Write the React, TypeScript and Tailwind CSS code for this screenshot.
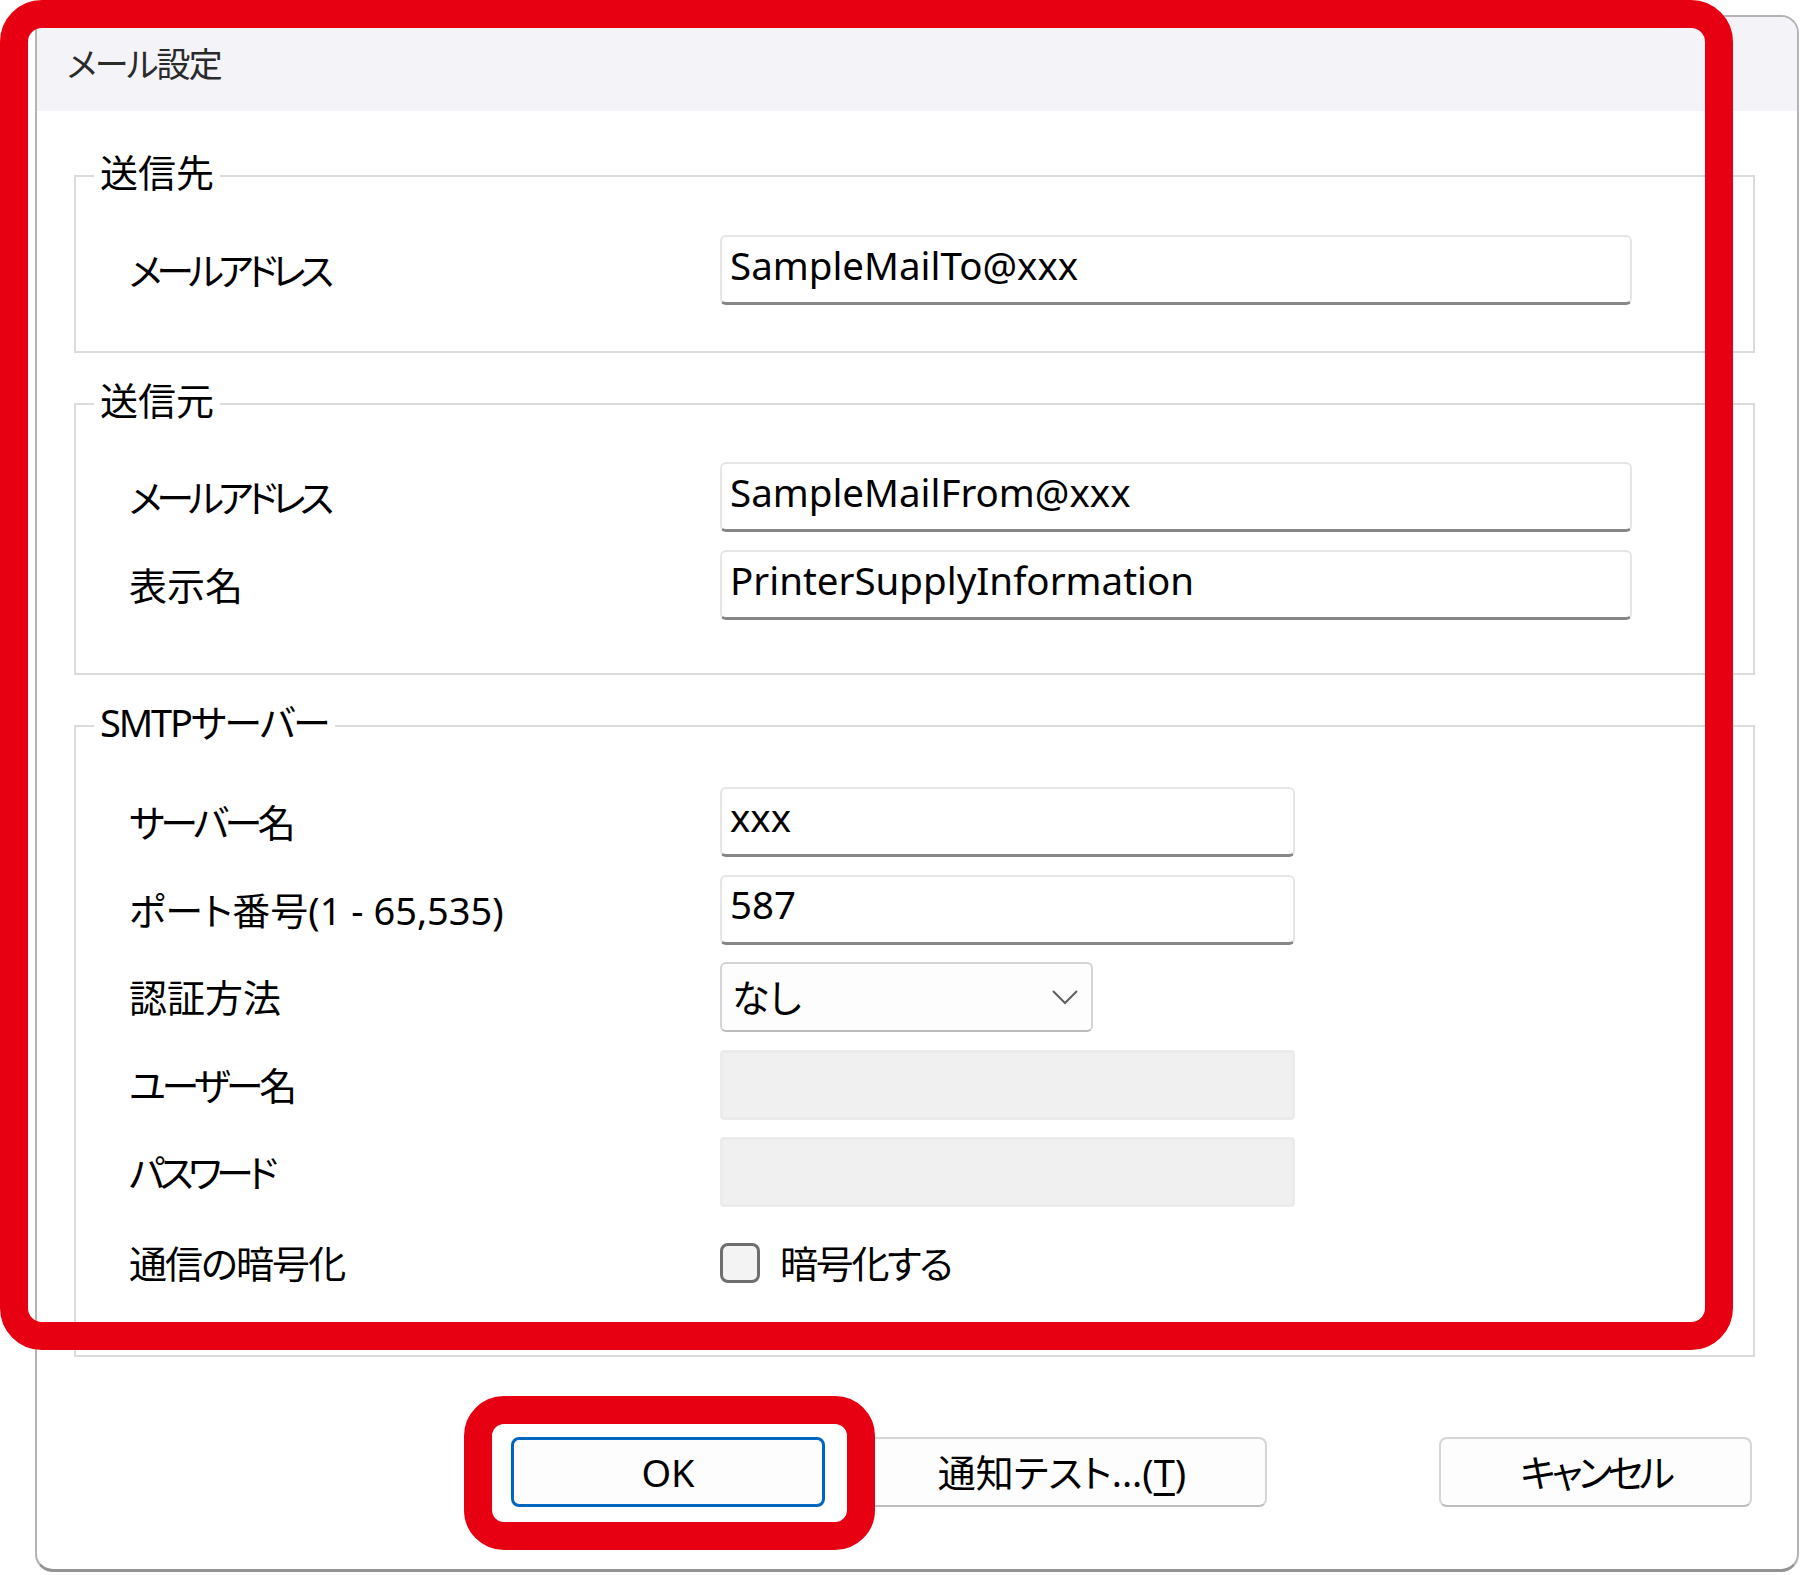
import type { ReactNode } from "react";

const FONT = "font-['Noto_Sans','Noto_Sans_CJK_JP',sans-serif] [font-feature-settings:'palt']";

function Group({ title, className, children }: { title: ReactNode; className: string; children: ReactNode }) {
  return (
    <div className={`relative ml-[37px] mr-[42px] border-2 border-[#dcdcdc] pl-[53px] ${className}`}>
      {/* legend sits over the top border */}
      <div className="absolute left-[18px] top-[-24px] bg-white px-[6px] text-[38px] leading-[38px] text-black">
        {title}
      </div>
      {children}
    </div>
  );
}

// kana in the original font are narrower, so labels carry their own tracking
function Row({ label, children, h = "h-[70px]", track = "" }: { label: string; children: ReactNode; h?: string; track?: string }) {
  return (
    <div className={`flex items-center ${h}`}>
      <div className={`w-[591px] text-[38px] leading-none text-black ${track}`}>{label}</div>
      {children}
    </div>
  );
}

function TextBox({ value, w = "w-[912px]" }: { value: string; w?: string }) {
  return (
    <div
      className={`flex h-[70px] items-center rounded-[6px] border-2 border-[#e6e6e6] border-b-[3px] border-b-[#878787] bg-white pl-[8px] pb-[9px] text-[38.5px] leading-none text-black ${w}`}
    >
      {value}
    </div>
  );
}

function DisabledBox() {
  return <div className="h-[70px] w-[575px] rounded-[4px] border-[3px] border-[#ebebeb] bg-[#f0f0f0]" />;
}

export default function App() {
  return (
    <div className={`relative h-[1575px] w-[1801px] overflow-hidden bg-white ${FONT}`}>
      {/* dialog window */}
      <div className="ml-[35px] mt-[15px] flex h-[1557px] w-[1764px] flex-col overflow-hidden rounded-[18px] border-2 border-[#b4b4b4] border-b-[3px] border-b-[#939393] bg-white">
        <div className="flex h-[94px] shrink-0 items-center bg-[#f3f3f8] pl-[30px] text-[34px] leading-none tracking-[-0.054em] text-[#2a2a2a]">
          メール設定
        </div>

        <Group title="送信先" className="mt-[64px] pt-[58px] pb-[46px]">
          <Row label="メールアドレス" track="tracking-[-0.15em]">
            <TextBox value="SampleMailTo@xxx" />
          </Row>
        </Group>

        <Group title="送信元" className="mt-[50px] pt-[57px] pb-[53px]">
          <div className="flex flex-col gap-[18px]">
            <Row label="メールアドレス" track="tracking-[-0.15em]">
              <TextBox value="SampleMailFrom@xxx" />
            </Row>
            <Row label="表示名">
              <TextBox value="PrinterSupplyInformation" />
            </Row>
          </div>
        </Group>

        <Group title={<span className="tracking-[-0.056em]">SMTPサーバー</span>} className="mt-[50px] pt-[60px] pb-[53px]">
          <div className="flex flex-col gap-[17.5px]">
            <Row label="サーバー名" track="tracking-[-0.115em]">
              <TextBox value="xxx" w="w-[575px]" />
            </Row>
            <Row label="ポート番号(1 - 65,535)">
              <TextBox value="587" w="w-[575px]" />
            </Row>
            <Row label="認証方法">
              <div className="flex h-[70px] w-[373px] items-center justify-between rounded-[6px] border-2 border-[#d4d4d4] border-b-[#bcbcbc] bg-[#fdfdfd] pl-[10px] pr-[12px] text-[38px] leading-none text-black">
                <span>なし</span>
                <svg width="28" height="16" viewBox="0 0 28 16" fill="none">
                  <polyline points="2,2 14,14 26,2" stroke="#5f5f5f" strokeWidth="2" />
                </svg>
              </div>
            </Row>
            <Row label="ユーザー名" track="tracking-[-0.115em]">
              <DisabledBox />
            </Row>
            <Row label="パスワード" track="tracking-[-0.145em]">
              <DisabledBox />
            </Row>
            <Row label="通信の暗号化" h="h-[77px]" track="tracking-[-0.05em]">
              <div className="flex items-center gap-[20px]">
                <div className="h-[40px] w-[40px] rounded-[8px] border-[3px] border-[#6e6e6e] bg-[#f3f3f3]" />
                <span className="text-[38px] leading-none tracking-[-0.06em] text-black">暗号化する</span>
              </div>
            </Row>
          </div>
        </Group>

        <div className="mt-[80px] flex">
          <button className="ml-[474px] h-[70px] w-[314px] rounded-[8px] border-[3px] border-[#0067c0] bg-[#fdfdfd] text-[38px] leading-none text-black">
            OK
          </button>
          <button className="ml-[32px] h-[70px] w-[410px] rounded-[8px] border-2 border-[#d6d6d6] border-b-[#bdbdbd] bg-[#fdfdfd] text-[38px] leading-none text-black">
            通知テスト...(<span className="underline underline-offset-[6px]">T</span>)
          </button>
          <button className="ml-[172px] h-[70px] w-[313px] rounded-[8px] border-2 border-[#d6d6d6] border-b-[#bdbdbd] bg-[#fdfdfd] text-[38px] leading-none tracking-[-0.115em] text-black">
            キャンセル
          </button>
        </div>
      </div>

      {/* red highlight rings drawn over the screenshot */}
      <div className="pointer-events-none absolute left-0 top-0 h-[1350px] w-[1733px] rounded-[42px] border-[28px] border-[#e60012]" />
      <div className="pointer-events-none absolute left-[464px] top-[1396px] h-[154px] w-[411px] rounded-[40px] border-[28px] border-[#e60012]" />
    </div>
  );
}
